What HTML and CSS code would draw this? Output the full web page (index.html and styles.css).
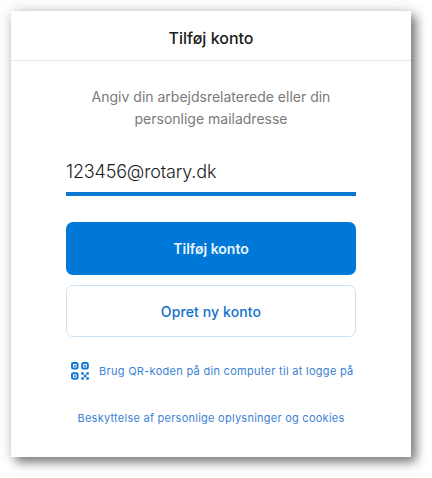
FILE: index.html
```html
<!DOCTYPE html>
<html lang="da">
<head>
<meta charset="utf-8">
<title>Tilføj konto</title>
<link rel="stylesheet" href="styles.css">
</head>
<body>
<main class="card">
  <header class="header"><h1 class="title">Tilføj konto</h1></header>
  <form class="form">
    <p class="intro">Angiv din arbejdsrelaterede eller din<br>personlige mailadresse</p>
    <div class="email">123456@rotary.dk</div>
    <button class="button primary" type="button">Tilføj konto</button>
    <button class="button secondary" type="button">Opret ny konto</button>
    <a class="qr">
      <svg class="qr-icon" viewBox="0 0 18 18" width="18" height="18">
        <g fill="none" stroke="currentColor" stroke-width="2">
          <rect x="1" y="1" width="5.6" height="5.6" rx="1.3"/>
          <rect x="11.2" y="1" width="5.6" height="5.6" rx="1.3"/>
          <rect x="1" y="11.2" width="5.6" height="5.6" rx="1.3"/>
        </g>
        <path fill="currentColor" d="M3 3h1.7v1.7H3zM13.2 3h1.7v1.7h-1.7zM3 13.2h1.7v1.7H3zM10.3 10.3h2.5v2.5h-2.5zM15.3 10.3h2.5v2.5h-2.5zM12.8 12.8h2.5v2.5h-2.5zM10.3 15.3h2.5v2.5h-2.5zM15.3 15.3h2.5v2.5h-2.5z"/>
      </svg>
      <span>Brug QR-koden på din computer til at logge på</span>
    </a>
    <a class="privacy">Beskyttelse af personlige oplysninger og cookies</a>
  </form>
</main>
</body>
</html>
```
FILE: styles.css
```css
* { box-sizing: border-box; }
body {
  margin: 0;
  padding: 11px;
  height: 478px;
  overflow: hidden;
  background: #fff;
  font-family: Inter, "Liberation Sans", sans-serif;
}
.card {
  width: 400px;
  height: 446px;
  background: #fff;
  box-shadow: 5px 5px 10px rgba(0, 0, 0, 0.5), 0 0 14px rgba(0, 0, 0, 0.14);
}
.header {
  height: 50px;
  padding-top: 4px;
  display: flex;
  align-items: center;
  justify-content: center;
  border-bottom: 1px solid #e4e4e4;
}
.title {
  margin: 0;
  font-size: 16px;
  font-weight: 500;
  line-height: 20px;
  color: #202020;
}
.form {
  display: flex;
  flex-direction: column;
  padding: 25px 55px 0;
}
.intro {
  margin: 0;
  font-size: 14px;
  line-height: 22px;
  text-align: center;
  color: #7a7a7a;
}
.email {
  height: 40px;
  margin-top: 26px;
  padding-top: 4px;
  font-size: 18px;
  font-weight: 300;
  line-height: 24px;
  letter-spacing: -0.17px;
  color: #1c1c1c;
  border-bottom: 4px solid #0c78d4;
}
.button {
  width: 290px;
  padding: 0;
  border: 0;
  border-radius: 7px;
  font-family: inherit;
  font-size: 14px;
  line-height: 20px;
}
.primary {
  height: 53px;
  margin-top: 26px;
  color: #eaf5ff;
  background: #0078d7;
  font-weight: 600;
}
.secondary {
  height: 52px;
  margin-top: 10px;
  padding-top: 1px;
  color: #1070cb;
  background: #fff;
  border: 1px solid #cce3f7;
  font-weight: 500;
  letter-spacing: 0.12px;
}
.qr {
  display: flex;
  align-items: center;
  height: 20px;
  margin-top: 24px;
  padding-left: 5px;
  gap: 10px;
  font-size: 11px;
  line-height: 20px;
  letter-spacing: 0.29px;
  white-space: nowrap;
  color: #3c82d5;
}
.qr-icon { flex: none; color: #1478d4; }
.privacy {
  margin-top: 27px;
  font-size: 11px;
  line-height: 20px;
  letter-spacing: 0.25px;
  text-align: center;
  white-space: nowrap;
  color: #3c82d5;
}
```
